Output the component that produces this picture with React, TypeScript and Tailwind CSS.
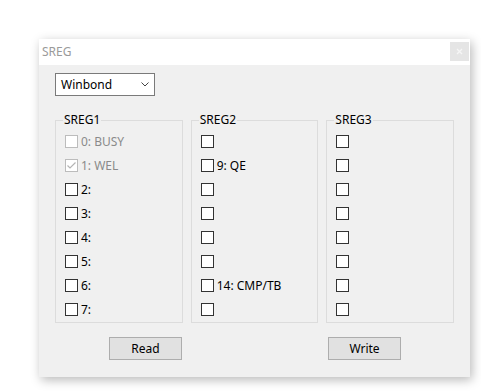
import React from 'react';

type Bit = { label?: string; disabled?: boolean; checked?: boolean };

const groups: { title: string; bits: Bit[] }[] = [
  {
    title: 'SREG1',
    bits: [
      { label: '0: BUSY', disabled: true },
      { label: '1: WEL', disabled: true, checked: true },
      { label: '2:' },
      { label: '3:' },
      { label: '4:' },
      { label: '5:' },
      { label: '6:' },
      { label: '7:' },
    ],
  },
  {
    title: 'SREG2',
    bits: [{}, { label: '9: QE' }, {}, {}, {}, {}, { label: '14: CMP/TB' }, {}],
  },
  { title: 'SREG3', bits: [{}, {}, {}, {}, {}, {}, {}, {}] },
];

const CheckBox = ({ bit }: { bit: Bit }) => (
  <div className="flex items-center h-[13px] gap-[3px]">
    <span
      className={`w-[13px] h-[13px] border bg-white flex items-center justify-center ${
        bit.disabled ? 'border-[#bcbcbc]' : 'border-[#333333]'
      }`}
    >
      {bit.checked && (
        <svg width="11" height="11" viewBox="0 0 11 11">
          <path d="M1.5 5.5 L4 8 L9.5 2.5" fill="none" stroke="#b4b4b4" strokeWidth="1.2" />
        </svg>
      )}
    </span>
    {bit.label && (
      <span className={`leading-[13px] ${bit.disabled ? 'text-[#8a8a8a]' : 'text-black'}`}>{bit.label}</span>
    )}
  </div>
);

const Group = ({ title, bits }: { title: string; bits: Bit[] }) => (
  <fieldset className="w-[128px] h-[211px] border border-[#dcdcdc]">
    <legend className="ml-[7px] px-[1px] leading-[16px] text-black">{title}</legend>
    <div className="flex flex-col gap-[11px] pl-[9px] pt-[7px]">
      {bits.map((b, i) => (
        <CheckBox key={i} bit={b} />
      ))}
    </div>
  </fieldset>
);

const App = () => {
  return (
    <div
      className="w-[481px] h-[392px] bg-white pt-[39px] pl-[39px] text-[12px]"
      style={{ fontFamily: '"Noto Sans", sans-serif' }}
    >
      <div className="w-[431px] h-[338px] bg-[#f0f0f0] flex flex-col shadow-[2px_3px_10px_rgba(0,0,0,0.28)]">
        <div className="h-[26px] bg-white flex items-start justify-between">
          <span className="pl-[3px] pt-[5px] text-[#9a9a9a] leading-[16px]">SREG</span>
          <div className="mt-[3px] mr-[1px] w-[19px] h-[19px] bg-[#e5e5e5] flex items-center justify-center">
            <svg width="7" height="7" viewBox="0 0 7 7">
              <path d="M1 1 L6 6 M6 1 L1 6" stroke="#f6f6f6" strokeWidth="1.3" />
            </svg>
          </div>
        </div>

        <div className="flex flex-col px-[16px] pt-[8px]">
          <div className="w-[100px] h-[23px] border border-[#7a7a7a] bg-white flex items-center justify-between pl-[5px] pr-[5px]">
            <span className="text-black">Winbond</span>
            <svg width="8" height="5" viewBox="0 0 8 5">
              <path d="M0.5 0.5 L4 4 L7.5 0.5" fill="none" stroke="#444" strokeWidth="1" />
            </svg>
          </div>

          <div className="flex gap-[8px] mt-[16px]">
            {groups.map((g) => (
              <Group key={g.title} title={g.title} bits={g.bits} />
            ))}
          </div>

          <div className="flex mt-[14px]">
            <button className="ml-[54px] w-[73px] h-[23px] bg-[#e1e1e1] border border-[#adadad] text-black">
              Read
            </button>
            <button className="ml-[146px] w-[73px] h-[23px] bg-[#e1e1e1] border border-[#adadad] text-black">
              Write
            </button>
          </div>
        </div>
      </div>
    </div>
  );
};

export default App;
